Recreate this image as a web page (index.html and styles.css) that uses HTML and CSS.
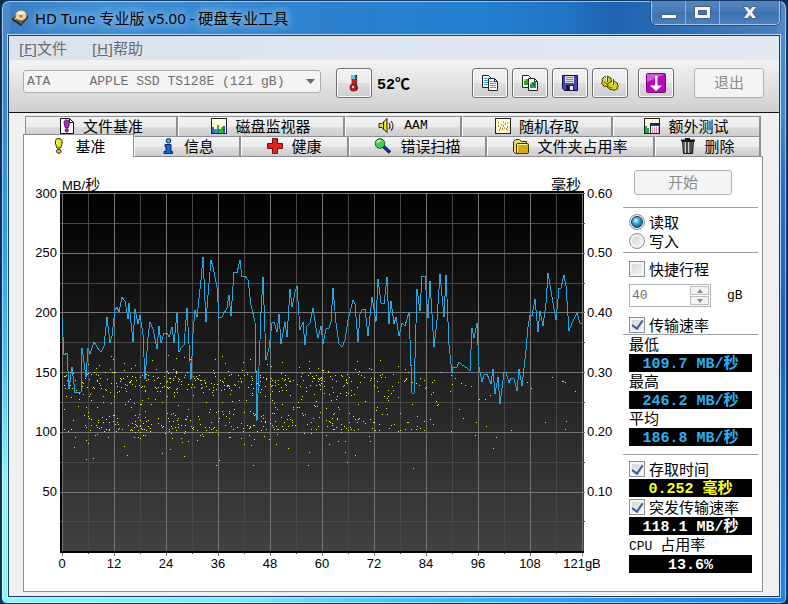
FILE: index.html
```html
<!DOCTYPE html>
<html lang="zh-CN">
<head>
<meta charset="utf-8">
<title>HD Tune 专业版 v5.00 - 硬盘专业工具</title>
<link rel="stylesheet" href="styles.css">
</head>
<body>
<div class="window">
  <header class="titlebar">
    <svg class="app-icon" width="18" height="18" viewBox="0 0 18 18" aria-hidden="true">
      <path d="M1 9 9 1l8 5-7 9z" fill="#6b5648"/><path d="M1 9l9 6v2L1 11z" fill="#2a211c"/><path d="M10 15l7-9v3l-7 8z" fill="#443329"/>
      <ellipse cx="10" cy="6.500" rx="5.500" ry="5" fill="#f2cf96"/><path d="M6 4q4-4 8 0l-4 3z" fill="#fff0cc"/><circle cx="10" cy="7" r="1.500" fill="#a8773c"/><path d="M4 10l4-2" stroke="#d8d0c8" stroke-width="1.500"/>
    </svg>
    <h1 class="title">HD Tune 专业版 v5.00 - 硬盘专业工具</h1>
    <div class="controls">
      <button class="control" aria-label="最小化"><svg width="18" height="16" viewBox="0 0 18 16"><rect x="1.500" y="9.500" width="15" height="4" fill="#fff" stroke="#46617f"/></svg></button>
      <button class="control" aria-label="最大化"><svg width="18" height="16" viewBox="0 0 18 16"><path fill-rule="evenodd" d="M.5 1.500h16v12H.5zM4.500 5.500h8v4h-8z" fill="#f4f4f4" stroke="#46617f"/></svg></button>
      <button class="control control-close" aria-label="关闭"><svg width="18" height="16" viewBox="0 0 18 16"><path d="M2 1.500h4.500L9 4.500l2.500-3H16L11.500 7.500l4.500 6h-4.500L9 10.500l-2.500 3H2l4.500-6z" fill="#f4f4f4" stroke="#46617f"/></svg></button>
    </div>
  </header>

  <main class="client">
    <nav class="menu">
      <a href="#file">[<u>F</u>]文件</a>
      <a href="#help">[<u>H</u>]帮助</a>
    </nav>

    <div class="toolbar">
      <div class="drive">
        <select class="drive-select" aria-label="驱动器" disabled>
          <option>ATA&nbsp;&nbsp;&nbsp;&nbsp;&nbsp;APPLE SSD TS128E (121 gB)</option>
        </select>
        <svg class="drive-arrow" width="9" height="5" viewBox="0 0 9 5" aria-hidden="true"><path d="M0 0h9L4.500 5z" fill="#6a6a6a"/></svg>
      </div>
      <button class="tool" aria-label="温度">
        <svg width="12" height="18" viewBox="0 0 12 18"><rect x="4" y="1" width="4" height="11" fill="#d31818"/><path d="M4 1h3v4H4z" fill="#4fd3df"/><circle cx="5.500" cy="13.500" r="3.500" fill="#d31818" stroke="#7c0c0c"/><path d="M8.500 1v10q2 3 0 5.500" fill="none" stroke="#301010"/><path d="M3.500 1v9M8 4h2M8 7h2M8 10h2" stroke="#a0a0a0"/><rect x="4" y="12" width="2" height="2" fill="#ffd0d0"/></svg>
      </button>
      <output class="temperature">52<span class="unit">℃</span></output>
      <div class="tools">
        <button class="tool" aria-label="复制文本">
          <svg width="18" height="16" viewBox="0 0 18 16"><path d="M1.500.5h6l3 3v9h-9z" fill="#fff" stroke="#222"/><path d="M3 3.500h4M3 5.500h6M3 7.500h6M3 9.500h5" stroke="#3aa5d8"/><path d="M7.500 3.500h6l3 3v9h-9z" fill="#fff" stroke="#222"/><path d="M13.500 3.500v3h3" fill="none" stroke="#222"/><path d="M9 6.500h4M9 8.500h6M9 10.500h6M9 12.500h6" stroke="#3aa5d8"/></svg>
        </button>
        <button class="tool" aria-label="复制图像">
          <svg width="18" height="16" viewBox="0 0 18 16"><path d="M1.500.5h6l3 3v9h-9z" fill="#fff" stroke="#222"/><path d="M3 4h4v6H3z" fill="#28a428"/><path d="M3 4h2v2H3z" fill="#d8d020"/><path d="M7.500 3.500h6l3 3v9h-9z" fill="#fff" stroke="#222"/><path d="M13.500 3.500v3h3" fill="none" stroke="#222"/><path d="M9 7h6v6H9z" fill="#28a428"/><path d="M11 8h3v3h-3z" fill="#145cc0"/><path d="M9 7h2v2H9z" fill="#d8d020"/></svg>
        </button>
        <button class="tool" aria-label="保存">
          <svg width="16" height="16" viewBox="0 0 16 16"><path d="M.5.5h15v15H2.500l-2-2z" fill="#4646b8" stroke="#10103c"/><path d="M3 1h9v7H3z" fill="#dcdcdc"/><path d="M4 2.500h7M4 4.500h7M4 6.500h7" stroke="#8c8c8c"/><path d="M4 10h8v5H4z" fill="#202038"/><path d="M8 11h3v4H8z" fill="#e8e8e8"/></svg>
        </button>
        <button class="tool" aria-label="选项">
          <svg width="18" height="16" viewBox="0 0 18 16"><path d="M2 3l1.500-1.500L5 2l2-1 1 1.500 2 .5v2l1 1.500-1.500 1.500.5 2-2 .5-1.500 1.500-1.500-1-2 .5-1-2-1.500-1L1.500 6 1 4.500z" fill="#d6d41e" stroke="#3a3800"/><path d="M8 8l2-1.500 2 .5 1.500-1 1.500 1.500 1.500.5v2l1 1.500-1.500 1 .5 1.500-2 .5-1.500 1-1.500-1-2 .5-1-1.500-2-1 .5-2-.5-1.500z" fill="#d6d41e" stroke="#3a3800"/><path d="M5.500 1v5M11.500 4v5" stroke="#eee"/><path d="M6.500 1v6M12.500 4v6" stroke="#444"/><path d="M3 7l3 2M8 12l3 1" stroke="#8a8610" stroke-width="1.500"/></svg>
        </button>
        <button class="tool tool-apart" aria-label="下载">
          <svg width="20" height="20" viewBox="0 0 20 20"><rect x=".5" y=".5" width="19" height="19" rx="1" fill="#b40cba" stroke="#730578"/><path d="M1 1h18L1 9z" fill="#d858dc"/><path d="M9 3h2.500v9.500H16L10 18l-6-5.500h5z" fill="#fff"/></svg>
        </button>
        <button class="exit" disabled>退出</button>
      </div>
    </div>

    <div class="content">
      <div role="tablist">
        <div class="tabs tabs-back">
          <button class="tab" role="tab"><svg width="16" height="16" viewBox="0 0 16 16"><path d="M1.500.5h9l4 4v11h-13z" fill="#fff" stroke="#111"/><path d="M10.500.5v4h4" fill="none" stroke="#111"/><path d="M7.500 2c4 0 3 4 1.500 8H6.500C5 6 4 2 7.500 2z" fill="#b520c8" stroke="#500858"/><circle cx="7.700" cy="12.500" r="1.600" fill="#b520c8" stroke="#500858"/></svg>文件基准</button>
          <button class="tab" role="tab"><svg width="16" height="16" viewBox="0 0 16 16"><rect x=".5" y=".5" width="15" height="15" fill="#fdfdd4" stroke="#222"/><path d="M1 15V9h2v2h2v4z" fill="#2c6ad0"/><path d="M4 15v-4h2V7h2v4h2V9h2v3h2v3z" fill="#24b838"/><path d="M7 15v-4h1v4M12 15V8h2v7z" fill="#2458c8"/></svg>磁盘监视器</button>
          <button class="tab" role="tab"><svg width="18" height="16" viewBox="0 0 18 16"><path d="M1 5.500h3l5-5v14l-5-5H1z" fill="#e5dc28" stroke="#222"/><path d="M5.500 4v8" stroke="#222"/><path d="M11 5q2 3 0 6M13 3q4 5 0 9.500" fill="none" stroke="#333" stroke-width="1.200"/></svg><span class="mono">AAM</span></button>
          <button class="tab" role="tab"><svg width="16" height="16" viewBox="0 0 16 16"><rect x=".5" y=".5" width="15" height="15" fill="#fffbd0" stroke="#222"/><path d="M3 8h1M5 10h1M8 8h1M7 11h1M10 6h1M12 9h1M11 11h1M4 12h1" stroke="#d03c20" stroke-width="1.500"/><path d="M3 5h1M6 7h1M9 10h1M12 5h1M12 12h1M8 4h1" stroke="#d8a000" stroke-width="1.500"/></svg>随机存取</button>
          <button class="tab" role="tab"><svg width="16" height="16" viewBox="0 0 16 16"><rect x=".5" y=".5" width="15" height="15" fill="#fdfdd4" stroke="#222"/><path d="M1 15V8h2v2h2v5z" fill="#24a838"/><rect x="6.500" y="5.500" width="9" height="10" fill="#fff" stroke="#181848"/><path d="M7 7h8" stroke="#2030a0" stroke-width="2"/><path d="M8 10h7M8 12h7M8 14h7" stroke="#b82060" stroke-dasharray="1 1"/></svg>额外测试</button>
        </div>
        <div class="tabs tabs-front">
          <button class="tab tab-active" role="tab" aria-selected="true"><svg width="16" height="16" viewBox="0 0 16 16"><path d="M7.500.5c5 0 4 5 2 9.500H6C4 5.500 3 .5 7.500.5z" fill="#e6e41c" stroke="#222"/><ellipse cx="7.800" cy="13.300" rx="2.300" ry="2" fill="#d8d418" stroke="#222"/><path d="M6 3v3" stroke="#fff"/></svg>基准</button>
          <button class="tab" role="tab"><svg width="16" height="16" viewBox="0 0 16 16"><circle cx="8.500" cy="2.800" r="2.300" fill="#3cb4e4" stroke="#082860"/><path d="M5 6.500h6v7h1.500v2H4v-2h2v-5H5z" fill="#1464e0" stroke="#082860"/></svg>信息</button>
          <button class="tab" role="tab"><svg width="16" height="16" viewBox="0 0 16 16"><path d="M5.500.5h5v5h5v5h-5v5h-5v-5h-5v-5h5z" fill="#dc2420" stroke="#701010"/></svg>健康</button>
          <button class="tab" role="tab"><svg width="18" height="16" viewBox="0 0 18 16"><path d="M9 8l7 6.500" stroke="#081870" stroke-width="3.500"/><path d="M10 9l5 4" stroke="#2858e0"/><circle cx="6" cy="5.500" r="4.800" fill="#48cc58" stroke="#165c24"/><path d="M3 5q1-3 4-2" fill="none" stroke="#d0ffd0" stroke-width="1.500"/></svg>错误扫描</button>
          <button class="tab" role="tab"><svg width="16" height="16" viewBox="0 0 16 16"><path d="M.5 3.500l2-2h4l2 2h5v10l-1 2h-10l-2-2z" fill="#e8d86c" stroke="#403000"/><rect x="3.500" y="5.500" width="12" height="10" rx="1" fill="#d4a818" stroke="#403000"/><path d="M4.500 14V6.500H14" fill="none" stroke="#fff49c"/></svg>文件夹占用率</button>
          <button class="tab" role="tab"><svg width="16" height="16" viewBox="0 0 16 16"><path d="M2.500 3.500h11l-1 12h-9z" fill="#6c6c6c" stroke="#111"/><path d="M5.500 4v11M8.500 4v11" stroke="#d0d0d0"/><path d="M7 4v11M11 4v11" stroke="#222"/><path d="M1 2.500h14M5 .5h5" stroke="#111" stroke-width="2"/></svg>删除</button>
        </div>
      </div>

      <section class="panel">
        <svg class="chart" viewBox="24 157 599 434" role="img" aria-label="传输速率与存取时间">
          <defs><linearGradient id="plot" x1="0" y1="0" x2="0" y2="1"><stop offset="0" stop-color="#000"/><stop offset="1" stop-color="#414141"/></linearGradient></defs>
          <rect x="60" y="191" width="524" height="362" fill="#000"/>
          <rect x="62" y="193" width="522" height="358" fill="url(#plot)"/>
          <g id="grid" shape-rendering="crispEdges"></g>
          <g id="dots" fill="#f4f420" shape-rendering="crispEdges"></g>
          <polyline class="rate" points="62,318 64,355 67,353 69,389 72,367 75,393 81,392 82,348 86,377 88,348 90,354 94,342 99,350 101,352 104,346 107,317 110,343 112,336 115,310 117,307 119,312 122,297 125,301 128,319 129,303 133,342 135,309 138,324 140,315 143,335 145,379 148,337 150,322 153,329 157,349 159,326 161,343 164,333 167,333 169,337 172,327 174,343 177,313 179,352 181,348 184,345 187,308 191,380 193,333 195,310 197,317 201,280 203,257 206,322 208,295 211,260 213,267 217,287 219,317 222,317 227,308 229,295 231,316 234,272 237,273 240,260 242,277 245,276 248,280 251,305 255,322 257,421 261,313 263,277 266,360 269,348 272,323 274,322 277,332 279,314 281,344 285,322 287,337 290,289 292,307 295,292 297,286 300,330 303,322 305,345 307,326 310,323 313,308 316,328 318,338 321,326 323,344 326,329 329,328 331,322 333,288 336,323 339,344 342,347 345,340 348,320 353,300 355,304 358,342 360,314 362,310 365,309 368,336 372,297 376,322 378,279 381,303 384,304 387,277 389,324 391,301 394,324 396,317 399,336 402,323 405,326 409,312 412,393 414,393 417,289 420,311 422,276 425,276 428,318 430,281 434,347 437,320 440,274 444,317 446,275 449,345 452,373 453,367 457,367 459,362 462,365 467,368 470,371 472,328 474,338 477,323 479,367 482,382 484,375 487,374 491,384 493,369 495,394 498,377 500,404 504,372 506,372 509,383 511,378 514,379 517,391 519,369 522,386 526,350 528,327 530,315 532,316 535,299 538,332 540,311 543,326 546,303 548,273 552,297 556,320 559,288 561,288 564,275 566,286 569,331 572,323 577,313 580,323 582,324"/>
          <g class="axis">
            <text x="62" y="190">MB/<tspan class="han">秒</tspan></text><text x="551" y="190" class="han">毫秒</text>
            <g text-anchor="end"><text x="57" y="198">300</text><text x="57" y="257">250</text><text x="57" y="317">200</text><text x="57" y="377">150</text><text x="57" y="436">100</text><text x="57" y="496">50</text></g>
            <g><text x="587" y="198">0.60</text><text x="587" y="257">0.50</text><text x="587" y="317">0.40</text><text x="587" y="377">0.30</text><text x="587" y="436">0.20</text><text x="587" y="496">0.10</text></g>
            <g text-anchor="middle"><text x="62" y="568">0</text><text x="114" y="568">12</text><text x="166" y="568">24</text><text x="218" y="568">36</text><text x="270" y="568">48</text><text x="322" y="568">60</text><text x="374" y="568">72</text><text x="426" y="568">84</text><text x="478" y="568">96</text><text x="530" y="568">108</text><text x="582" y="568">121gB</text></g>
          </g>
        </svg>

        <aside class="side">
          <button class="start" disabled>开始</button>
          <div class="group group-mode">
            <label class="option"><input type="radio" name="mode" checked>读取</label>
            <label class="option"><input type="radio" name="mode">写入</label>
          </div>
          <div class="group group-range">
            <label class="option"><input type="checkbox">快捷行程</label>
            <div class="stroke">
              <div class="spinner">
                <input id="stroke-size" class="spinner-input" type="text" value="40" aria-label="快捷行程大小" disabled>
                <div class="spinner-buttons">
                  <button aria-label="增加" disabled><svg width="6" height="4" viewBox="0 0 6 4"><path d="M0 4h6L3 0z" fill="#888"/></svg></button>
                  <button aria-label="减少" disabled><svg width="6" height="4" viewBox="0 0 6 4"><path d="M0 0h6L3 4z" fill="#888"/></svg></button>
                </div>
              </div>
              <label class="mono" for="stroke-size">gB</label>
            </div>
            <label class="option"><input type="checkbox" checked>传输速率</label>
          </div>
          <div class="group group-rate">
            <span class="caption">最低</span><output class="value rate-value">109.7 MB/秒</output>
            <span class="caption">最高</span><output class="value rate-value">246.2 MB/秒</output>
            <span class="caption">平均</span><output class="value rate-value">186.8 MB/秒</output>
          </div>
          <div class="group group-access">
            <label class="option"><input type="checkbox" checked>存取时间</label><output class="value access-value">0.252 毫秒</output>
            <label class="option"><input type="checkbox" checked>突发传输速率</label><output class="value">118.1 MB/秒</output>
            <span class="caption"><span class="mono">CPU </span>占用率</span><output class="value">13.6%</output>
          </div>
        </aside>
      </section>
    </div>
  </main>
</div>
<script src="chart.js"></script>
</body>
</html>
```

FILE: styles.css
```css
* { box-sizing: border-box; }

body {
  margin: 0;
  background: #0b2e58;
  color: #000;
  font: 15px/18px "Noto Sans CJK SC", sans-serif;
}

button, input, select { font: inherit; color: inherit; margin: 0; padding: 0; }
svg { display: block; flex: none; }
.mono { font-family: "Liberation Mono", "Noto Sans CJK SC", monospace; font-size: 13px; white-space: pre; }

/* Window frame */
.window {
  display: flex;
  flex-direction: column;
  min-height: 100vh;
  margin: 0 1px;
  padding: 0 6px 6px;
  border: 1px solid #123a63;
  border-radius: 8px 8px 6px 6px;
  box-shadow: inset 0 0 0 1px rgba(255, 255, 255, .55);
  background:
    linear-gradient(90deg, #8ef6fb 0%, #7aeafb 30%, #4ac2fa 50%, #2f9cf0 75%, #1f7ede 100%) bottom / 100% 8px no-repeat,
    linear-gradient(180deg, #4b8ccc 0%, #3b86cc 15%, #2aa0ea 40%, #48c4f4 60%, #8bf5f8 80%, #90f5f5 100%) left / 8px 100% no-repeat,
    linear-gradient(180deg, #5388c2 0%, #4a88cc 18%, #2a70bd 30%, #1a62b6 55%, #1f74d0 80%, #2386e6 100%) right / 8px 100% no-repeat,
    linear-gradient(90deg, #3c7ec4 0%, #3f8ed4 12%, #2b80cf 45%, #2481d2 60%, #2173c4 72%, #1d63b0 78%, #3474b8 90%, #4a80bc 100%);
}

.titlebar { display: flex; align-items: center; height: 34px; padding-left: 3px; }
.title {
  flex: 1;
  margin: 0 0 0 6px;
  font: 15px/20px "Noto Sans", "Noto Sans CJK SC", sans-serif;
  text-shadow: 0 0 8px #a9cdee, 0 0 12px #a9cdee;
}
.controls {
  display: flex;
  align-self: flex-start;
  height: 24px;
  border: 1px solid #a9c4e0;
  border-top: 0;
  border-radius: 0 0 5px 5px;
  box-shadow: 0 0 0 1px rgba(20, 60, 110, .6);
}
.control {
  display: flex;
  justify-content: center;
  align-items: center;
  width: 34px;
  border: 0;
  border-right: 1px solid #8fb0d4;
  background: linear-gradient(#5585bd, #4579b5 50%, #3c72b0 50%, #4a80be);
}
.control-close { width: 59px; border-right: 0; border-radius: 0 0 4px 0; }

.client {
  display: flex;
  flex-direction: column;
  flex: 1;
  border: 1px solid #173d66;
  background: #f0f0f0;
  box-shadow: 0 0 0 1px rgba(210, 240, 255, .8);
}

.menu { display: flex; gap: 25px; height: 24px; padding: 3px 10px; background: linear-gradient(90deg, #dae3ee, #e3e9f1); }
.menu a { color: #6c6c6c; text-decoration: none; font-family: "Noto Sans", "Noto Sans CJK SC", sans-serif; }

/* Toolbar */
.toolbar {
  display: flex;
  align-items: flex-start;
  height: 53px;
  padding: 8px 15px 0 14px;
  border-bottom: 1px solid #111;
  background: linear-gradient(#f3f3f3, #cfcfcf);
}
.drive { position: relative; flex: 0 1 298px; margin: 2px 15px 0 0; }
.drive-select {
  display: block;
  width: 100%;
  height: 23px;
  padding: 0 20px 0 3px;
  border: 1px solid #adadad;
  border-radius: 3px;
  appearance: none;
  background: #f4f4f4;
  color: #6d6d6d;
  opacity: 1;
  font-family: "Liberation Mono", monospace;
  font-size: 13px;
}
.drive-arrow { position: absolute; right: 6px; top: 9px; pointer-events: none; }
.tool {
  display: flex;
  justify-content: center;
  align-items: center;
  width: 36px;
  height: 30px;
  border: 1px solid #707070;
  border-radius: 3px;
  background: linear-gradient(#f2f2f2 0%, #ebebeb 50%, #dddddd 50%, #cfcfcf 100%);
  box-shadow: inset 0 0 0 1px #fafafa;
}
.temperature { margin: 6px 0 0 5px; font: bold 15px/18px "Liberation Mono", monospace; }
.unit { font-family: "Noto Sans CJK SC", sans-serif; }
.tools { display: flex; gap: 4px; margin-left: auto; }
.tool-apart { margin-left: 6px; }
.exit, .start { padding-bottom: 2px; border: 1px solid #adb2b5; border-radius: 3px; background: #f4f4f4; color: #8a8a8a; }
.exit { width: 70px; margin-left: 16px; }

/* Tabs */
.content { flex: 1; padding: 3px 16px 3px 14px; }
.tabs { display: grid; height: 20px; }
.tabs-back { grid-template-columns: 153fr 167fr 117fr 151fr 148fr; margin: 0 2px; }
.tabs-front { grid-template-columns: 111fr 107fr 108fr 138fr 168fr 106fr; margin-right: 2px; }
.tab {
  display: flex;
  justify-content: center;
  align-items: center;
  gap: 8px;
  min-width: 0;
  padding-bottom: 1px;
  border: 1px solid #8c8e94;
  border-bottom: 0;
  border-left-color: #fff;
  border-right-width: 2px;
  background: linear-gradient(#f3f3f3, #ebebeb 50%, #dcdcdc 55%, #cdcdcd);
  line-height: 16px;
  white-space: nowrap;
}
.tab:first-child { border-left-color: #8c8e94; }
.tab-active {
  z-index: 1;
  margin: -2px 0 -1px;
  padding-bottom: 1px;
  border-right-width: 1px;
  background: #fff;
}

.panel { display: flex; border: 1px solid #8c8e94; background: #fff; }
.chart { flex: 1; min-width: 0; height: auto; }
.rate { fill: none; stroke: #25a7dd; stroke-width: 1; shape-rendering: crispEdges; }
.major { stroke: #747474; }
.minor { stroke: #484848; }
.axis { font: 13px "Liberation Sans", sans-serif; }
.han { font: 15px "Noto Sans CJK SC", sans-serif; }

/* Side column */
.side { display: flex; flex-direction: column; flex: 0 0 135px; margin-right: 4px; }
.start { align-self: flex-start; width: 98px; height: 25px; margin: 13px 0 12px 11px; }
.group { display: flex; flex-direction: column; padding-left: 6px; border-top: 1px solid #a0a0a0; }
.option { display: flex; align-items: center; gap: 4px; height: 19px; white-space: nowrap; }
.caption { height: 19px; white-space: nowrap; }
.group-mode { padding-top: 4px; padding-bottom: 2px; }
.group-range { padding-top: 6px; }
.group-rate { padding-bottom: 8px; }
.group-access { padding-top: 4px; }
.group-access .option, .group-access .caption { height: 20px; }

input[type="radio"], input[type="checkbox"] {
  appearance: none;
  flex: none;
  display: grid;
  place-items: center;
  width: 16px;
  height: 16px;
  border: 1px solid #8e8f8f;
  background: linear-gradient(135deg, #cfd3d8, #f6f6f6);
  box-shadow: inset 0 0 0 2px #f4f4f4;
}
input[type="radio"] { border-radius: 50%; }
input[type="radio"]:checked::before {
  content: "";
  width: 10px;
  height: 10px;
  border: 1px solid #12344f;
  border-radius: 50%;
  background: radial-gradient(circle at 40% 35%, #c9f2ff, #2a9ad0 45%, #0b4d7d);
}
input[type="checkbox"]:checked::before {
  content: "";
  width: 5px;
  height: 9px;
  margin-top: -2px;
  border: solid #3f5a9c;
  border-width: 0 2px 2px 0;
  transform: rotate(35deg);
}

.stroke { display: flex; align-items: center; gap: 16px; margin: 6px 0 8px; }
.spinner { display: flex; width: 82px; height: 23px; padding: 1px; border: 1px solid #adb2b5; background: #fff; }
.spinner-input { flex: 1; width: 0; padding-left: 1px; border: 0; background: none; color: #6d6d6d; font: 13px "Liberation Mono", monospace; }
.spinner-buttons { display: grid; gap: 1px; width: 19px; }
.spinner-buttons button { display: grid; place-items: center; min-height: 0; border: 1px solid #bcbcbc; background: #f3f3f3; }

.value {
  height: 18px;
  margin-right: 6px;
  padding-top: 2px;
  background: #000;
  color: #fff;
  font: bold 15px/18px "Liberation Mono", "Noto Sans CJK SC", monospace;
  text-align: center;
  white-space: nowrap;
}
.rate-value { color: #2cb0ee; }
.access-value { color: #ffff28; }
```

FILE: chart.js
```js
const NS = "http://www.w3.org/2000/svg";

function add(parent, name, attributes) {
  const node = document.createElementNS(NS, name);
  for (const key in attributes) node.setAttribute(key, attributes[key]);
  parent.appendChild(node);
}

// Grid: minor lines first so that the major ones lie on top.
const grid = document.getElementById("grid");
for (const parity of [1, 0]) {
  const cls = parity ? "minor" : "major";
  for (let i = parity; i <= 12; i += 2) {
    const y = Math.round(193 + i * 29.85) + 0.5;
    if (i < 12) add(grid, "line", { x1: 60, x2: 585, y1: y, y2: y, class: cls });
  }
  for (let i = parity; i <= 20; i += 2) {
    const x = 62.5 + i * 26;
    add(grid, "line", { x1: x, x2: x, y1: 193, y2: 551, class: cls });
    add(grid, "line", { x1: x, x2: x, y1: 553, y2: parity ? 554 : 556, class: cls });
  }
}

// Access time samples: two dense bands that thin out towards the end of the disk.
const dots = document.getElementById("dots");
let seed = 90731;
function random() {
  seed = (seed * 16807) % 2147483647;
  return seed / 2147483647;
}
for (let i = 0; i < 820; i++) {
  const zone = random();
  const along = random();
  const x = zone < 0.79 ? 63 + along * 270 : zone < 0.98 ? 333 + (1 - Math.sqrt(1 - along)) * 180 : 490 + along * 88;
  const band = random();
  let y;
  if (band < 0.47) y = 366 + (random() + random()) * 16;
  else if (band < 0.83) y = 405 + Math.sqrt(random()) * 26;
  else if (band < 0.90) y = 394 + random() * 14;
  else if (band < 0.93) y = 354 + random() * 16;
  else y = 432 + random() * random() * 45;
  add(dots, "rect", { x: Math.round(x), y: Math.round(y), width: 1, height: 1 });
}
```
